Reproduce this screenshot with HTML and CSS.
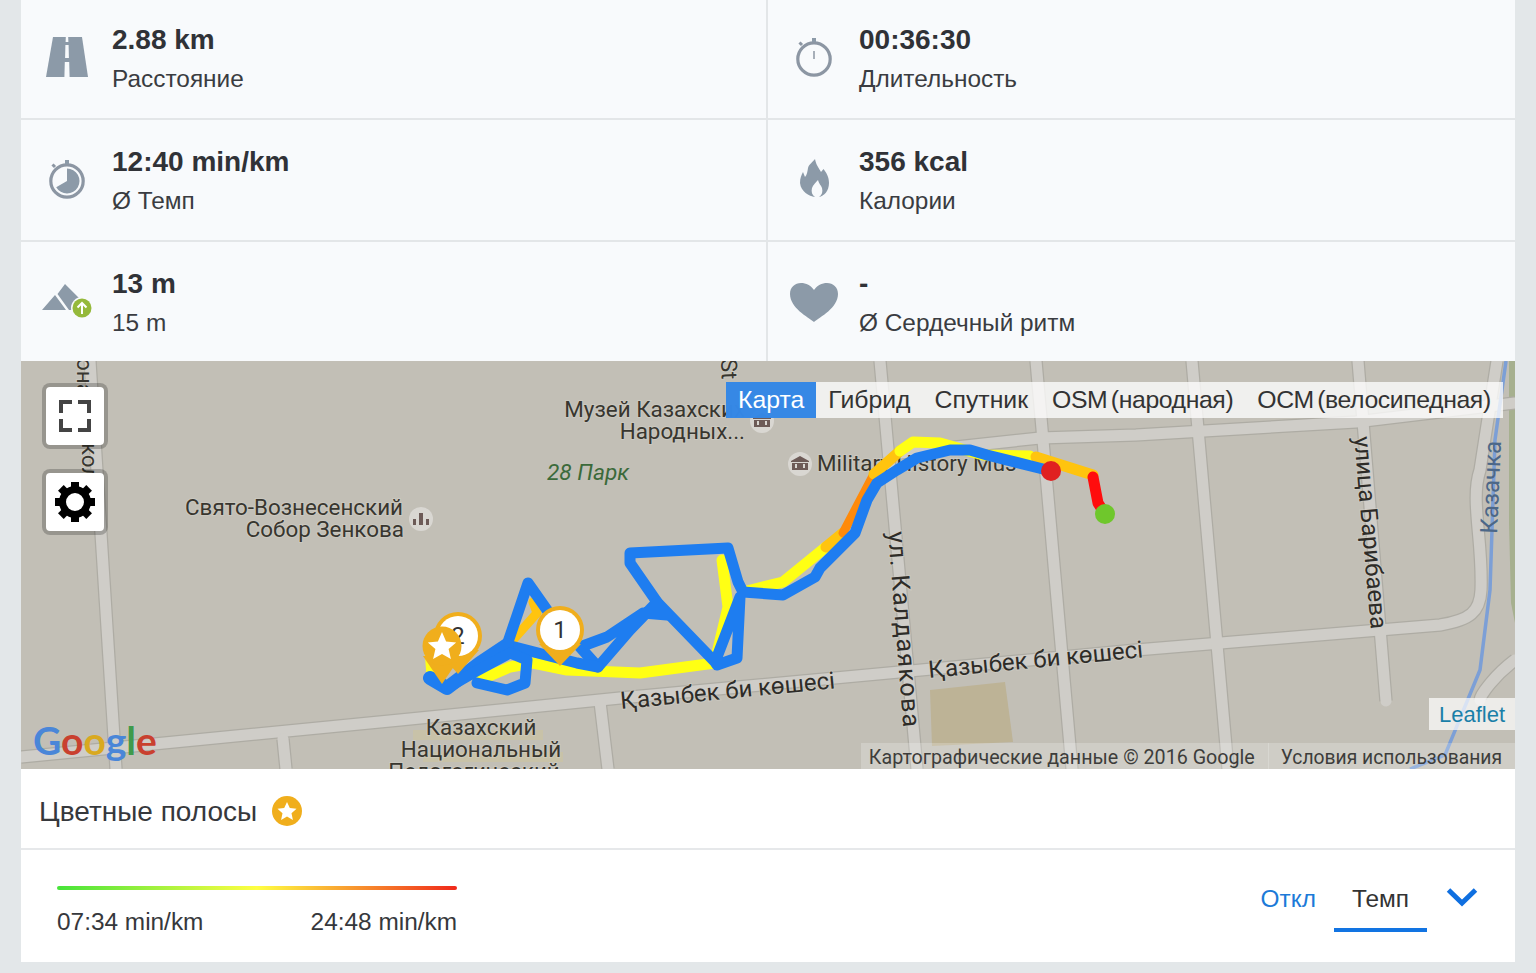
FILE: index.html
```html
<!DOCTYPE html>
<html lang="ru">
<head>
<meta charset="utf-8">
<title>Тренировка</title>
<link rel="stylesheet" href="styles.css">
</head>
<body>
<main class="panel">
  <section class="stats">
    <div class="stat">
      <div class="stat-icon">
        <svg width="44" height="42" viewBox="0 0 44 42"><path class="ico" d="M8 1h29l6 40H1z"/><path class="ico-gap" d="M20.800 1h2.400l.2 5h-2.800zM20.400 9h3.200l.3 13h-3.800zM19.800 26h4.400l.4 15h-5.200z"/></svg>
      </div>
      <div><div class="value">2.88 km</div><div class="label">Расстояние</div></div>
    </div>
    <div class="stat">
      <div class="stat-icon">
        <svg width="38" height="42" viewBox="0 0 38 42"><circle class="ico-line" cx="19" cy="23" r="16.200"/><rect class="ico" x="17" y="2" width="4" height="4"/><path class="ico-thin" d="M7 9l-2.500-2.500"/><path class="ico-tick" d="M19 15v8"/></svg>
      </div>
      <div><div class="value">00:36:30</div><div class="label">Длительность</div></div>
    </div>
    <div class="stat">
      <div class="stat-icon">
        <svg width="38" height="42" viewBox="0 0 38 42"><circle class="ico-line" cx="19" cy="23" r="16.200"/><rect class="ico" x="17" y="2" width="4" height="4"/><path class="ico-thin" d="M7 9l-2.500-2.500"/><path class="ico" d="M19 10.500a12.500 12.500 0 1 1-10.800 18.800L19 23z"/></svg>
      </div>
      <div><div class="value">12:40 min/km</div><div class="label">Ø Темп</div></div>
    </div>
    <div class="stat">
      <div class="stat-icon">
        <svg width="34" height="42" viewBox="0 0 34 42"><path class="ico" d="M18 1c1 6 4 9 6 13l2.500-3c3 4 5.500 8 5.500 14 0 8-5 13-10 14 3-2 4-5 3-9-1-3-3-4-4-8-2 2-5 5-6 8-1 4 0 7 3 9-6-1-14-5-15-14 0-5 1.500-8 3-11l2 5c2-2 2.500-6 3-9 1-4 5-6 7-9z"/></svg>
      </div>
      <div><div class="value">356 kcal</div><div class="label">Калории</div></div>
    </div>
    <div class="stat">
      <div class="stat-icon">
        <svg width="52" height="38" viewBox="0 0 52 38"><path class="ico" d="M1 27L14 12 25 27zM24 1L16.500 11 28 27h8l2-12z"/><circle cx="41" cy="25" r="11" fill="#f8fafc"/><circle cx="41" cy="25" r="9.500" fill="#95b93b"/><path class="arrow-up" d="M41 31V20M36.500 24.500L41 20l4.500 4.500"/></svg>
      </div>
      <div><div class="value">13 m</div><div class="label">15 m</div></div>
    </div>
    <div class="stat">
      <div class="stat-icon">
        <svg width="52" height="42" viewBox="0 0 52 42"><path class="ico" d="M26 41C20 36 2 27 2 13 2 6 7 2 13 2c5 0 10 2.500 13 7 3-4.500 8-7 13-7 6 0 11 4 11 11 0 14-18 23-24 28z"/></svg>
      </div>
      <div><div class="value">-</div><div class="label">Ø Сердечный ритм</div></div>
    </div>
  </section>

  <section class="map">
    <svg class="map-canvas" viewBox="21 361 1494 408" width="1494" height="408">
      <rect x="21" y="361" width="1494" height="408" fill="#c2bfb6"/>
      <path d="M1509 361h6v262l-4-20-2-80z" fill="#a6b08f"/>
      <path d="M930 690l75-8 8 60-81 4z" fill="#bdb396"/>
      <path d="M413 730h130v10h-130zM423 752h140v10h-140z" fill="#c8c2a8"/>
      <g class="road-edge">
        <path d="M90 361l26 408"/>
        <path d="M21 757L400 720 620 698 1136 650 1440 625C1470 620 1480 612 1481 590 1483 540 1470 500 1480 470L1497 361"/>
        <path d="M283 739l3 30"/><path d="M600 702l8 67"/>
        <path d="M880 361L917 769"/><path d="M1036 361l36 408"/>
        <path d="M1192 361l36 408"/><path d="M1358 361l28 340"/>
        <path d="M900 453L1040 438 1136 435 1356 422 1515 403"/>
        <path d="M1515 660C1495 675 1480 695 1480 700"/>
      </g>
      <g class="road-fill">
        <path d="M90 361l26 408"/>
        <path d="M21 757L400 720 620 698 1136 650 1440 625C1470 620 1480 612 1481 590 1483 540 1470 500 1480 470L1497 361"/>
        <path d="M283 739l3 30"/><path d="M600 702l8 67"/>
        <path d="M880 361L917 769"/><path d="M1036 361l36 408"/>
        <path d="M1192 361l36 408"/><path d="M1358 361l28 340"/>
        <path d="M900 453L1040 438 1136 435 1356 422 1515 403"/>
        <path d="M1515 660C1495 675 1480 695 1480 700"/>
      </g>
      <path class="river" d="M1506 361L1495 440 1490 590 1480 670 1445 755 1410 769"/>

      <text class="m-label end" x="745" y="417">Музей Казахских</text>
      <text class="m-label end" x="745" y="439">Народных...</text>
      <text class="m-park" x="547" y="480">28 Парк</text>
      <text class="m-label" x="817" y="471">Military History Mus</text>
      <text class="m-label end" x="403" y="515">Свято-Вознесенский</text>
      <text class="m-label end" x="404" y="537">Собор Зенкова</text>
      <text class="m-label mid" x="481" y="735">Казахский</text>
      <text class="m-label mid" x="481" y="757">Национальный</text>
      <text class="m-label mid" x="474" y="779">Педагогический</text>
      <text class="m-street" transform="translate(621 709) rotate(-5.500)">Қазыбек би көшесі</text>
      <text class="m-street" transform="translate(929 678) rotate(-5.500)">Қазыбек би көшесі</text>
      <text class="m-street wide" transform="translate(888 532) rotate(85.500)">ул. Калдаякова</text>
      <text class="m-street" transform="translate(1354 437) rotate(85)">улица Барибаева</text>
      <text class="m-river" transform="translate(1497 534) rotate(-87.500)">Казачка</text>
      <text class="m-label" transform="translate(721 359) rotate(88)">St</text>
      <text class="m-label" transform="translate(77 358) rotate(90)">она</text>
      <text class="m-label" transform="translate(82 443) rotate(90)">кол</text>

      <g class="poi"><circle cx="762" cy="421" r="12"/><path d="M762 413l9 5v1h-18v-1zM754 420h16v7h-16z"/><path class="poi-hole" d="M757 421h2v4h-2zM765 421h2v4h-2z"/></g>
      <g class="poi"><circle cx="800" cy="464" r="12"/><path d="M800 456l9 5v1h-18v-1zM792 463h16v7h-16z"/><path class="poi-hole" d="M795 464h2v4h-2zM803 464h2v4h-2z"/></g>
      <g class="poi"><circle cx="421" cy="519" r="12"/><path d="M413 525v-6h3v6zM419 525v-12h4v12zM426 525v-6h3v6z"/></g>

      <path class="trk yellow" d="M722 560l6 47-11 46"/>
      <path class="trk yellow" d="M715 663L640 673 567 670 533 663 510 667 480 680"/>
      <path class="trk yellow" d="M430 650l2 26"/>
      <path class="trk amber thin" d="M533 602l4 11-24 27"/>
      <path class="trk yellow" d="M743 592L783 582 826 547"/>
      <path class="trk amber" d="M826 547L843 533"/>
      <path class="trk orange" d="M843 533L874 474"/>
      <path class="trk amber" d="M874 474L900 451"/>
      <path class="trk yellow" d="M900 451L913 442 940 443 983 455 1030 456"/>
      <path class="trk amber" d="M1036 457L1093 475"/>
      <path class="trk red" d="M1093 477L1098 503 1105 514"/>

      <path class="trk blue" d="M1051 471L987 455 970 450 950 450 917 458 897 470 877 483 867 500 855 533 820 568 815 577 783 595 743 592 738 582 728 548 630 553 630 563 657 602 715 662 717 665 737 658 740 597 717 657"/>
      <path class="trk blue" d="M657 605L667 615 643 613 607 637 580 647 598 667 630 630 657 602"/>
      <path class="trk blue" d="M598 667L577 663 507 645 528 583 547 610"/>
      <path class="trk blue thick" d="M507 645L480 663 447 688 430 678"/>
      <path class="trk blue" d="M447 688L473 673 510 653 527 660 525 683 507 690 477 683"/>
      <circle cx="1051" cy="471" r="10" fill="#e02020"/>
      <circle cx="1105" cy="514" r="10" fill="#6fc72c"/>

      <g>
        <path class="pin" d="M437 650h42l-21 24z"/>
        <circle class="pin" cx="458" cy="636" r="24"/><circle cx="458" cy="636" r="20" fill="#fff"/>
        <text class="pin-num" x="458" y="644">2</text>
      </g>
      <g>
        <path class="pin" d="M423 656h38l-19 28z"/>
        <circle class="pin" cx="442" cy="646" r="19.500"/>
        <path d="M442 632l4.100 9.400 10.100 1-7.600 6.700 2.300 10-8.900-5.200-8.900 5.200 2.300-10-7.600-6.700 10.100-1z" fill="#fff"/>
      </g>
      <g>
        <path class="pin" d="M539 644h42l-21 22z"/>
        <circle class="pin" cx="560" cy="630" r="24"/><circle cx="560" cy="630" r="20" fill="#fff"/>
        <text class="pin-num" x="560" y="638">1</text>
      </g>

      <text class="g-logo" x="33" y="755"><tspan fill="#4a86d8">G</tspan><tspan fill="#c9402f">o</tspan><tspan fill="#d9a91f">o</tspan><tspan fill="#4a86d8">g</tspan><tspan fill="#3f9a4c">l</tspan><tspan fill="#c9402f">e</tspan></text>
    </svg>

    <div class="map-tools">
      <button class="tool" type="button" aria-label="Во весь экран">
        <svg width="32" height="32" viewBox="0 0 32 32"><path class="fs" d="M2 13V2h11M19 2h11v11M30 19v11H19M13 30H2V19"/></svg>
      </button>
      <button class="tool" type="button" aria-label="Настройки">
        <svg width="42" height="42" viewBox="-21 -21 42 42"><circle class="gear-ring" r="12.500"/><g class="gear-teeth"><rect x="-4" y="-20" width="8" height="8"/><rect x="-4" y="-20" width="8" height="8" transform="rotate(45)"/><rect x="-4" y="-20" width="8" height="8" transform="rotate(90)"/><rect x="-4" y="-20" width="8" height="8" transform="rotate(135)"/><rect x="-4" y="-20" width="8" height="8" transform="rotate(180)"/><rect x="-4" y="-20" width="8" height="8" transform="rotate(225)"/><rect x="-4" y="-20" width="8" height="8" transform="rotate(270)"/><rect x="-4" y="-20" width="8" height="8" transform="rotate(315)"/></g></svg>
      </button>
    </div>

    <nav class="layers">
      <span class="layer active">Карта</span>
      <span class="layer">Гибрид</span>
      <span class="layer">Спутник</span>
      <span class="layer long">OSM (народная)</span>
      <span class="layer long">ОСМ (велосипедная)</span>
    </nav>

    <a class="leaflet">Leaflet</a>
    <div class="attrib">
      <span class="attrib-item">Картографические данные © 2016 Google</span>
      <span class="attrib-item terms">Условия использования</span>
    </div>
  </section>

  <header class="bands-head">
    <h2 class="bands-title">Цветные полосы</h2>
    <svg class="bands-star" width="30" height="30" viewBox="0 0 30 30"><circle cx="15" cy="15" r="15" fill="#f0ae1c"/><path d="M15 6l2.800 6.100 6.700.7-5 4.500 1.400 6.600-5.900-3.400-5.900 3.400 1.400-6.600-5-4.500 6.700-.7z" fill="#fff"/></svg>
  </header>

  <footer class="bands">
    <div class="legend">
      <div class="legend-bar"></div>
      <div class="legend-labels"><span>07:34 min/km</span><span>24:48 min/km</span></div>
    </div>
    <div class="tabs">
      <span class="tab link">Откл</span>
      <span class="tab current">Темп</span>
      <svg class="chevron" width="32" height="20" viewBox="0 0 32 20"><path d="M2.500 3L16 16 29.500 3"/></svg>
    </div>
  </footer>
</main>
</body>
</html>
```

FILE: styles.css
```css
* { box-sizing: border-box; }
html, body { margin: 0; height: 973px; overflow: hidden; }
body {
  background: #e3e7e9;
  font-family: "Liberation Sans", Arial, sans-serif;
  color: #303237;
}
.panel { width: 1494px; margin: 0 21px; }

/* stats */
.stats {
  display: grid;
  grid-template-columns: 747px 747px;
  grid-template-rows: 122px 122px 119px;
  margin-top: -2px;
  background: #f8fafc;
}
.stat {
  display: flex;
  align-items: center;
  padding-top: 2px;
  border-right: 2px solid #e3e6e8;
  border-bottom: 2px solid #e3e6e8;
}
.stat:nth-child(even) { border-right: 0; }
.stat:nth-last-child(-n+2) { border-bottom: 0; padding-top: 3px; }
.stat-icon { width: 91px; flex: none; display: flex; justify-content: center; align-items: center; margin-bottom: 4px; }
.stat:nth-last-child(-n+2) .stat-icon { margin-bottom: 2px; }
.value { font-size: 28px; line-height: 32px; font-weight: 700; }
.label { font-size: 24.400px; line-height: 32px; margin-top: 7px; color: #3a3c41; }

.ico { fill: #8c9aa8; }
.ico-gap { fill: #f8fafc; }
.ico-line { fill: none; stroke: #8c96a3; stroke-width: 3.200; }
.ico-thin { fill: none; stroke: #8c96a3; stroke-width: 3; }
.ico-tick { fill: none; stroke: #8c96a3; stroke-width: 1.500; }
.arrow-up { fill: none; stroke: #fff; stroke-width: 2; }

/* map */
.map { position: relative; height: 408px; overflow: hidden; }
.map-canvas { display: block; }
.road-edge path { fill: none; stroke: #aeaca4; stroke-width: 13.500; }
.road-fill path { fill: none; stroke: #cfcdc8; stroke-width: 11; stroke-linecap: round; }
.river { fill: none; stroke: #7c9fd6; stroke-width: 3.500; }
.m-label, .m-street, .m-park, .m-river, .pin-num {
  font-family: Roboto, "Liberation Sans", sans-serif;
}
.m-label { font-size: 22.400px; fill: #38362f; paint-order: stroke; stroke: rgba(210,208,200,.55); stroke-width: 2px; }
.m-street { font-size: 24px; fill: #2e2c28; paint-order: stroke; stroke: rgba(210,208,200,.55); stroke-width: 2px; }
.wide { font-size: 25px; letter-spacing: 1.200px; }
.end { text-anchor: end; }
.mid { text-anchor: middle; }
.m-park { font-size: 22.700px; font-style: italic; fill: #3b6a3a; }
.m-river { font-size: 24px; fill: #4c6788; }
.poi circle { fill: #d9d7d2; }
.poi path { fill: #6d5b57; }
.poi .poi-hole { fill: #d9d7d2; }
.trk { fill: none; stroke-width: 11; stroke-linejoin: round; stroke-linecap: round; }
.yellow { stroke: #ffff14; }
.amber { stroke: #ffc40f; }
.orange { stroke: #ff8a0a; stroke-width: 9; }
.red { stroke: #ff0d0d; }
.thin { stroke-width: 9; }
.blue { stroke: #1e7df0; stroke-width: 11; }
.thick { stroke-width: 14; }
.pin { fill: #f0ae1c; }
.pin-num { font-size: 24px; text-anchor: middle; fill: #333; }
.g-logo { font-family: Lato, "Liberation Sans", sans-serif; font-size: 39px; font-weight: 700; }

.map-tools {
  position: absolute;
  left: 21px;
  top: 22px;
  display: flex;
  flex-direction: column;
  gap: 20px;
}
.tool {
  width: 66px;
  height: 66px;
  padding: 0;
  display: flex;
  align-items: center;
  justify-content: center;
  background: #fff;
  background-clip: padding-box;
  border: 4px solid rgba(0,0,0,.22);
  border-radius: 8px;
}
.fs { fill: none; stroke: #444; stroke-width: 4; }
.gear-ring { fill: none; stroke: #000; stroke-width: 7; }
.gear-teeth rect { fill: #000; }

.layers {
  position: absolute;
  left: 705px;
  top: 21px;
  height: 36px;
  display: flex;
  background: rgba(255,255,255,.76);
  font-size: 24.800px;
  line-height: 36px;
  color: #333;
}
.layer { padding: 0 12px; }
.layer.long { letter-spacing: -.4px; word-spacing: -3px; }
.layer.active { background: rgba(40,128,228,.93); color: #fff; }

.leaflet {
  position: absolute;
  right: 0;
  bottom: 39px;
  width: 86px;
  height: 32px;
  padding-left: 10px;
  font-size: 22px;
  line-height: 34px;
  color: #1a7fa8;
  background: rgba(255,255,255,.7);
}
.attrib {
  position: absolute;
  right: 0;
  bottom: 0;
  height: 26px;
  display: flex;
  background: rgba(255,255,255,.22);
  font-family: Roboto, "Liberation Sans", sans-serif;
  font-size: 19.700px;
  line-height: 30px;
  color: #3d3d3b;
}
.attrib-item { padding: 0 13px 0 8px; }
.terms { padding-left: 12px; border-left: 1px solid rgba(255,255,255,.2); font-size: 19.300px; }

/* bands */
.bands-head {
  height: 81px;
  display: flex;
  align-items: center;
  gap: 15px;
  padding: 4px 0 0 18px;
  background: #fff;
  border-bottom: 2px solid #e6e8ea;
}
.bands-title { margin: 2px 0 0; font-size: 28px; font-weight: 400; line-height: 32px; color: #36383c; }
.bands {
  height: 112px;
  display: flex;
  justify-content: space-between;
  padding: 36px 37px 0 36px;
  background: #fff;
}
.legend { width: 400px; }
.legend-bar {
  height: 4px;
  border-radius: 2px;
  background: linear-gradient(90deg, #46e43a 0%, #ffff42 50%, #f0281a 100%);
}
.legend-labels {
  display: flex;
  justify-content: space-between;
  margin-top: 16px;
  font-size: 24.400px;
  line-height: 32px;
  color: #36383c;
}
.tabs { display: flex; align-items: flex-start; margin-top: -12px; }
.tab { font-size: 24.400px; line-height: 32px; padding: 9px 18px 0; height: 58px; }
.tab.current { color: #333; border-bottom: 4px solid #1274e2; margin-right: 19px; }
.tab.link { color: #1c7ad8; }
.chevron { margin-top: 13px; }
.chevron path { fill: none; stroke: #0f6fe0; stroke-width: 5; }
```
